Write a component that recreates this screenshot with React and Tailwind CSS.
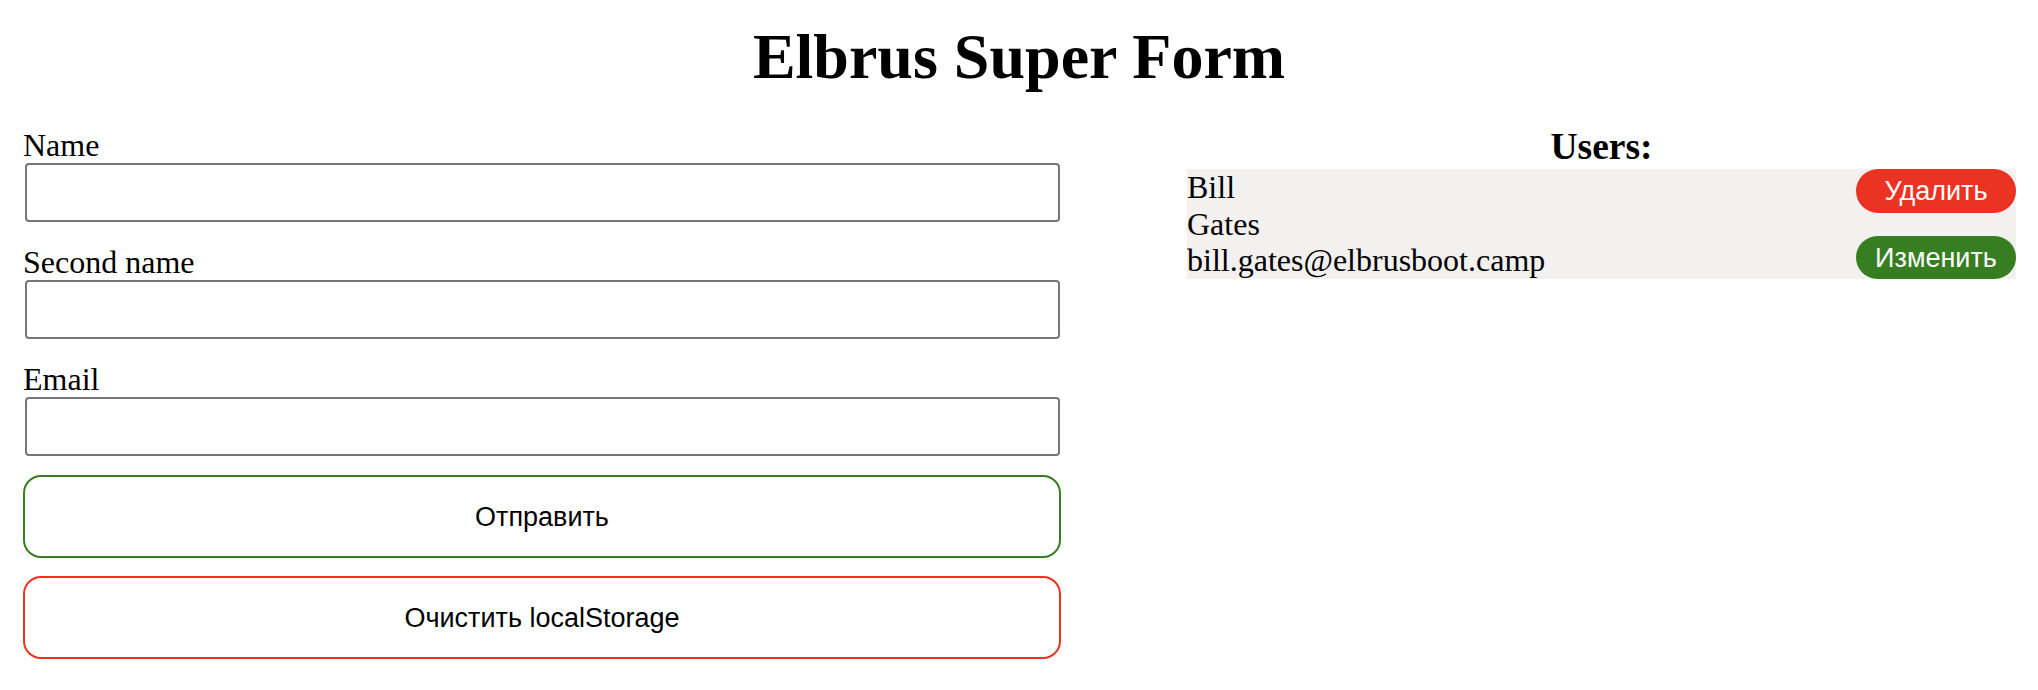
import React, { useState } from 'react';

const fields = [
  { id: 'name', label: 'Name' },
  { id: 'surname', label: 'Second name' },
  { id: 'email', label: 'Email' },
];

export default function App() {
  const [users] = useState([
    { id: 1, name: 'Bill', surname: 'Gates', email: 'bill.gates@elbrusboot.camp' },
  ]);

  return (
    <div className="min-h-screen bg-white text-black font-['Liberation_Serif',serif] text-[32px] leading-[36px]">
      <h1 className="pt-[21px] text-center text-[64px] font-bold leading-[72px]">Elbrus Super Form</h1>

      <div className="flex justify-between items-start pl-[23px] pr-[22px]">
        {/* Form */}
        <form className="w-[1038px] pt-[34px] flex flex-col" onSubmit={(e) => e.preventDefault()}>
          <div className="flex flex-col gap-[22px]">
            {fields.map((f) => (
              <div key={f.id} className="flex flex-col">
                <label htmlFor={f.id} className="leading-[36px]">{f.label}</label>
                <input
                  id={f.id}
                  type="text"
                  className="mx-[1.5px] h-[59px] border-2 border-[#767676] rounded-[4px] bg-white"
                />
              </div>
            ))}
          </div>
          <button
            type="submit"
            className="mt-[19px] h-[83px] border-2 border-[#377e22] rounded-[18px] bg-white font-['Liberation_Sans',Arial,sans-serif] text-[27px]"
          >
            Отправить
          </button>
          <button
            type="button"
            className="mt-[18px] h-[83px] border-2 border-[#ea3323] rounded-[18px] bg-white font-['Liberation_Sans',Arial,sans-serif] text-[27px]"
          >
            Очистить localStorage
          </button>
        </form>

        {/* Users list */}
        <div className="w-[829px] pt-[33px]">
          <h3 className="text-center text-[37.5px] font-bold leading-[42px]">Users:</h3>
          {users.map((u) => (
            <div key={u.id} className="mt-[1px] h-[110px] flex justify-between bg-[#f2f1f0]">
              <div className="flex flex-col leading-[36.7px]">
                <span>{u.name}</span>
                <span>{u.surname}</span>
                <span>{u.email}</span>
              </div>
              <div className="flex flex-col justify-between font-['Liberation_Sans',Arial,sans-serif] text-[27px] text-white">
                <button className="w-[160px] h-[44px] rounded-full bg-[#ea3323]">Удалить</button>
                <button className="w-[160px] h-[43px] rounded-full bg-[#377e22]">Изменить</button>
              </div>
            </div>
          ))}
        </div>
      </div>
    </div>
  );
}
